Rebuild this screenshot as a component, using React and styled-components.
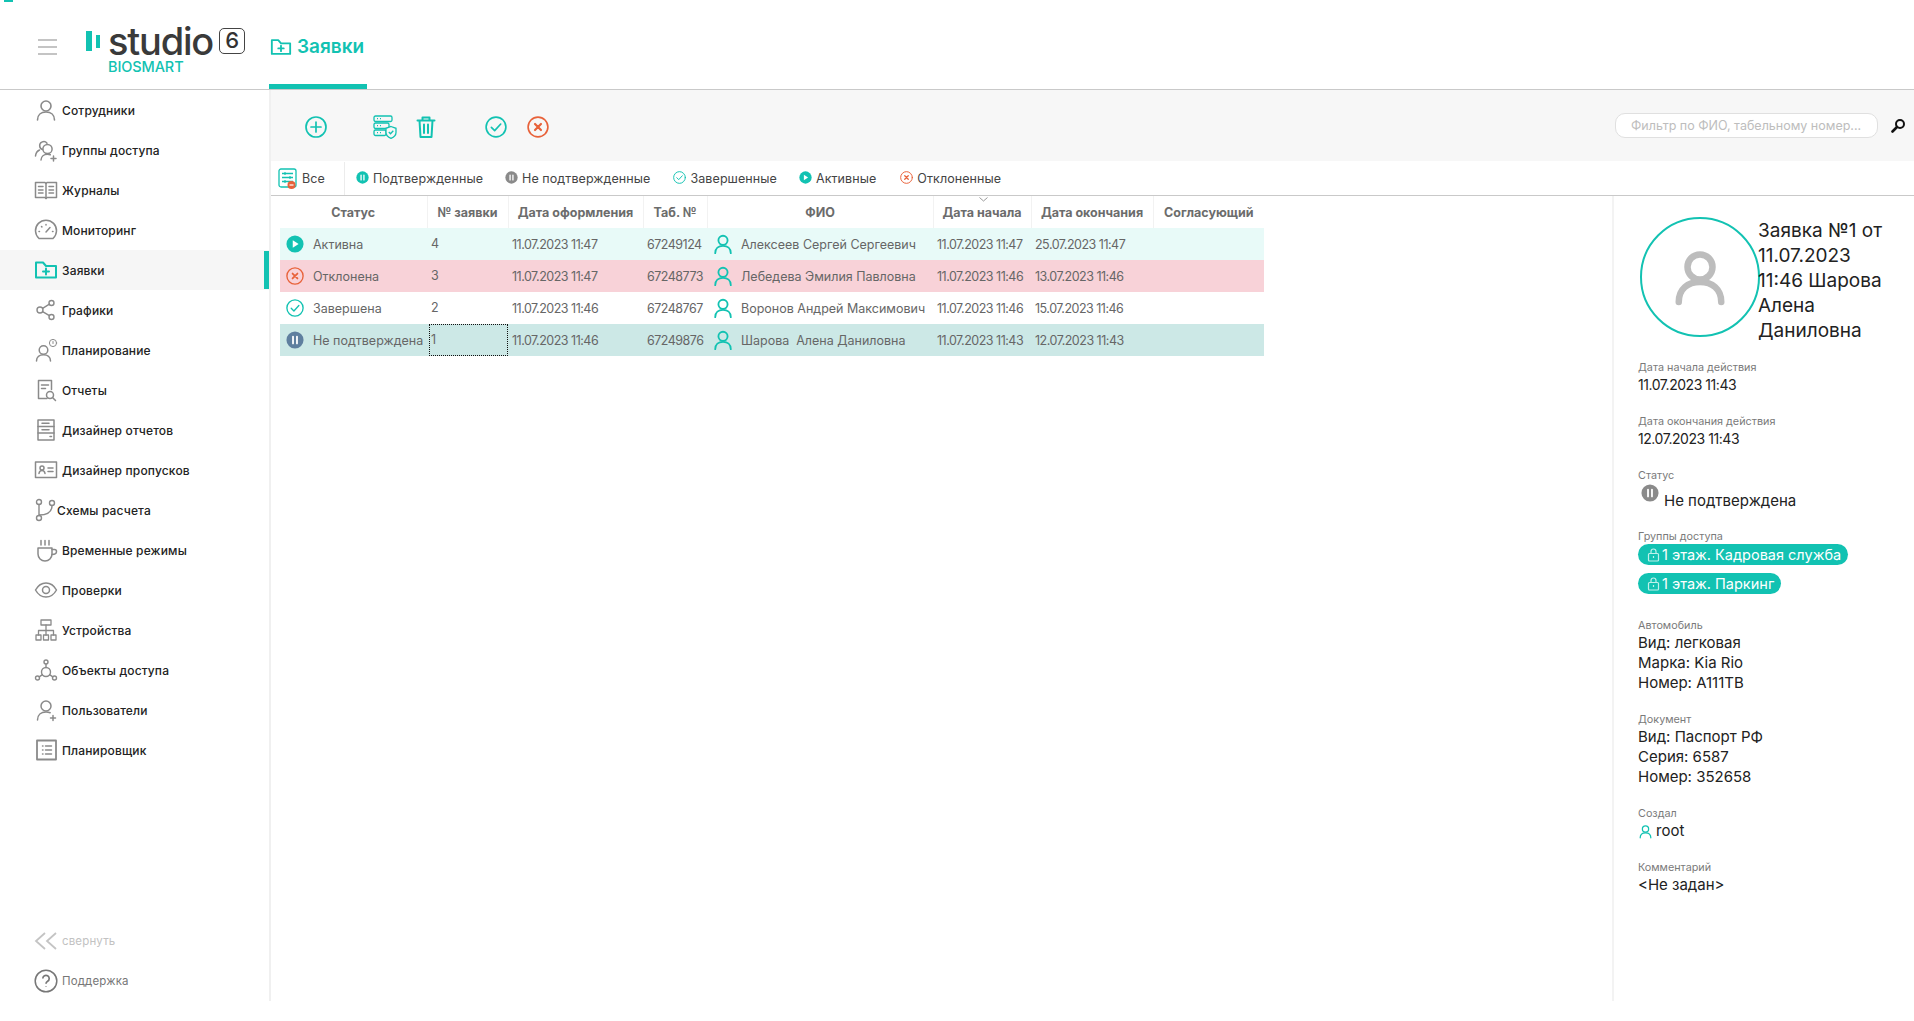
import React from 'react';
import styled, { createGlobalStyle } from 'styled-components';

const TEAL = '#12c2b2';
const ORANGE = '#e8623a';
const GRAY = '#8a8a8a';

const GlobalStyle = createGlobalStyle`
  html, body { margin: 0; padding: 0; background: #fff; }
  body { font-family: Inter, "Noto Sans", "Liberation Sans", sans-serif; color: #222; overflow: hidden; }
  * { box-sizing: border-box; }
`;

const Page = styled.div`
  position: relative;
  height: 1001px;
  display: flex;
  flex-direction: column;
`;
const LoadMark = styled.div`
  position: absolute;
  left: 4px;
  top: 0;
  width: 9px;
  height: 2px;
  background: ${TEAL};
`;

/* header */
const Header = styled.header`
  height: 90px;
  flex: none;
  display: flex;
  border-bottom: 1px solid #c9c9c9;
`;
const Burger = styled.div`
  width: 19px;
  margin: 39px 0 0 38px;
  height: 16px;
  display: flex;
  flex-direction: column;
  justify-content: space-between;
  span { height: 2px; background: #c4c4c4; }
`;
const Logo = styled.div`
  margin-left: 29px;
  width: 183px;
  padding-top: 25px;
`;
const LogoTop = styled.div`
  display: flex;
  align-items: center;
  height: 32px;
`;
const LogoBar = styled.span`
  width: ${p => p.$w}px;
  height: ${p => p.$h}px;
  margin-right: ${p => p.$gap}px;
  background: ${TEAL};
`;
const LogoWord = styled.span`
  font-size: 38px;
  font-weight: 500;
  letter-spacing: -1.2px;
  line-height: 32px;
  color: #3a3a3a;
`;
const LogoSix = styled.span`
  width: 26px;
  height: 26px;
  margin-left: 6px;
  border: 1.5px solid #444;
  border-radius: 5px;
  font-size: 22px;
  font-weight: 500;
  line-height: 23px;
  text-align: center;
  color: #333;
`;
const LogoSub = styled.div`
  margin: 2px 0 0 22px;
  font-size: 14.5px;
  line-height: 15px;
  font-weight: 500;
  letter-spacing: -.1px;
  color: ${TEAL};
`;
const HeaderTab = styled.div`
  width: 98px;
  height: 89px;
  display: flex;
  align-items: center;
  gap: 5px;
  padding: 9px 0 0 1px;
  border-bottom: 5px solid ${TEAL};
  font-size: 19px;
  font-weight: 600;
  white-space: nowrap;
  color: ${TEAL};
`;

/* sidebar */
const Body = styled.div`
  flex: 1;
  display: flex;
  min-height: 0;
`;
const Sidebar = styled.nav`
  width: 271px;
  flex: none;
  display: flex;
  flex-direction: column;
  border-right: 2px solid #f0f0f0;
`;
const NavItem = styled.div`
  position: relative;
  height: 40px;
  display: flex;
  align-items: center;
  gap: ${p => (p.$tight ? 0 : 4)}px;
  padding-left: ${p => (p.$tight ? 33 : 34)}px;
  background: ${p => (p.$active ? '#f6f6f6' : 'transparent')};
  font-size: 12px;
  font-weight: 500;
  letter-spacing: .15px;
  color: #222;
`;
const ActiveBar = styled.span`
  position: absolute;
  right: 0;
  top: 1px;
  width: 5px;
  height: 38px;
  background: ${TEAL};
`;
const SideFooter = styled.div`
  margin-top: auto;
`;
const FootItem = styled(NavItem)`
  font-weight: 400;
  font-size: 11.5px;
  color: ${p => (p.$muted ? '#c2c2c2' : '#777')};
  gap: 4px;
`;

/* main */
const Main = styled.main`
  flex: 1;
  min-width: 0;
  display: flex;
  flex-direction: column;
`;
const Toolbar = styled.div`
  height: 71px;
  flex: none;
  display: flex;
  align-items: center;
  padding: 3px 0 0 33px;
  background: #f7f7f7;
`;
const ToolIcon = styled.span`
  display: flex;
  margin-left: ${p => p.$ml || 0}px;
`;
const Search = styled.div`
  margin-left: auto;
  display: flex;
  align-items: center;
  gap: 13px;
  padding-right: 8px;
  margin-top: -3px;
`;
const SearchBox = styled.div`
  width: 263px;
  height: 25px;
  padding-left: 15px;
  border: 1px solid #e0e0e0;
  border-radius: 10px;
  background: #fff;
  font-size: 12.5px;
  line-height: 23px;
  color: #bdbdbd;
`;
const Filters = styled.div`
  height: 35px;
  flex: none;
  display: flex;
  align-items: center;
  padding-top: 1px;
  border-bottom: 1px solid #c9c9c9;
  font-size: 12.5px;
  letter-spacing: .08px;
  color: #444;
`;
const AllFilter = styled.div`
  width: 74px;
  height: 33px;
  display: flex;
  align-items: center;
  gap: 4px;
  padding-left: 7px;
  border-right: 1px solid #ececec;
`;
const FilterItem = styled.div`
  display: flex;
  align-items: center;
  gap: 4px;
  margin-left: ${p => p.$ml}px;
  svg { margin-top: -3px; }
`;
const Content = styled.div`
  flex: 1;
  min-height: 0;
  display: flex;
`;
const TableWrap = styled.div`
  flex: 1;
  padding-left: 9px;
`;
const Table = styled.table`
  width: 984px;
  table-layout: fixed;
  border-collapse: collapse;
  font-size: 12.5px;
  color: #666;
`;
const Th = styled.th`
  position: relative;
  width: ${p => p.$w}px;
  height: 32px;
  padding: 0;
  font-size: 12.5px;
  font-weight: 700;
  color: #6c6c6c;
  text-align: center;
  border-left: ${p => (p.$first ? 0 : '1px solid #f2f2f2')};
`;
const SortMark = styled.svg`
  position: absolute;
  top: 1px;
  left: 45px;
`;
const Row = styled.tr`
  height: 32px;
  background: ${p => p.$bg};
`;
const Td = styled.td`
  padding: 0 0 0 4px;
  white-space: nowrap;
  overflow: hidden;
`;
const NumTd = styled(Td)`
  letter-spacing: -.5px;
`;
const FocusTd = styled(Td)`
  padding: 0;
`;
const FocusBox = styled.div`
  height: 32px;
  margin-left: ${p => (p.$focus ? 2 : 0)}px;
  padding-left: ${p => (p.$focus ? 2 : 4)}px;
  line-height: 32px;
  ${p => p.$focus && 'outline: 1px dotted #111; outline-offset: -1px;'}
`;
const CellFlex = styled.div`
  display: flex;
  align-items: center;
  gap: ${p => p.$gap}px;
  padding-left: ${p => p.$pl}px;
`;

/* details */
const Details = styled.aside`
  width: 302px;
  flex: none;
  padding: 21px 0 0 24px;
  border-left: 2px solid #f3f3f3;
`;
const DetailsHead = styled.div`
  display: flex;
  margin-bottom: 17px;
`;
const Avatar = styled.div`
  width: 120px;
  height: 120px;
  flex: none;
  display: flex;
  align-items: center;
  justify-content: center;
  margin-left: 2px;
  border: 2px solid ${TEAL};
  border-radius: 50%;
`;
const Title = styled.div`
  margin: 1px 0 0 -2px;
  font-size: 19px;
  line-height: 25px;
  color: #222;
`;
const Block = styled.div`
  margin-bottom: ${p => p.$mb ?? 19}px;
`;
const Label = styled.div`
  font-size: 10.8px;
  line-height: 15px;
  color: #7a7a7a;
`;
const Value = styled.div`
  font-size: 15px;
  line-height: 20px;
  color: #222;
`;
const DateValue = styled(Value)`
  font-size: 14px;
  letter-spacing: -.45px;
`;
const StatusValue = styled.div`
  display: flex;
  gap: 5px;
  height: 27px;
  padding: 1px 0 0 3px;
  font-size: 15px;
  color: #222;
  span { padding-top: 8px; line-height: 17px; }
`;
const Pill = styled.div`
  display: flex;
  align-items: center;
  gap: 2px;
  width: fit-content;
  height: 21px;
  margin-bottom: 8px;
  padding: 0 7px 0 9px;
  border-radius: 11px;
  background: ${TEAL};
  font-size: 14.5px;
  color: #fff;
`;

/* icons */
const Svg = ({ size = 24, color = GRAY, sw = 1.5, children, vb = 24 }) => (
  <svg width={size} height={size} viewBox={`0 0 ${vb} ${vb}`} fill="none" stroke={color} strokeWidth={sw} strokeLinecap="round" strokeLinejoin="round" style={{ flex: 'none', display: 'block' }}>
    {children}
  </svg>
);

const FolderPlus = ({ size = 24, color = TEAL }) => (
  <Svg size={size} color={color} sw={2}>
    <path d="M2 19.5V4.5h7l3 3.5h10v11.5z" />
    <path d="M12 10.5v6M9 13.5h6" />
  </Svg>
);
const PersonIcon = ({ size = 24, color = GRAY, sw = 1.6 }) => (
  <Svg size={size} color={color} sw={sw}>
    <circle cx="12" cy="8" r="5" />
    <path d="M3.5 22c0-5.2 3.6-8 8.5-8s8.5 2.8 8.5 8" />
  </Svg>
);

const navIcons = {
  person: <PersonIcon />,
  group: (
    <Svg>
      <path d="M8.5 11.500a4 4 0 0 1-.8-7.300 4 4 0 0 1 5.300 1M1.500 18c.3-3 1.800-5 4-6" />
      <circle cx="13.500" cy="11" r="4.600" />
      <path d="M7 22c.2-3.600 3-5.700 6.500-5.700 1 0 2 .2 2.800.5M19.500 18v5M17 20.500h5" />
    </Svg>
  ),
  book: (
    <Svg>
      <path d="M1.500 4.500h9.500l1 1 1-1h9.500v15H13l-1 1-1-1H1.500z" />
      <path d="M12 5.500v15M4.500 8.500h4.500M4.500 12h4.500M4.500 15h4.500M15 8.500h4.500M15 12h4.500M15 15h4.500" />
    </Svg>
  ),
  gauge: (
    <Svg>
      <path d="M5 20.500a10.500 10.500 0 1 1 14 0z" />
      <path d="M12 14l4-4.500M5 13.500h.5M7.500 8.500l.4.4M12 6.500v.5M18.500 13.500h.5" />
    </Svg>
  ),
  folder: <FolderPlus />,
  share: (
    <Svg sw={1.4}>
      <circle cx="6" cy="12" r="3" />
      <circle cx="17.500" cy="5" r="2.500" />
      <circle cx="17.500" cy="19" r="2.500" />
      <path d="M8.600 10.400l6.800-4.200M8.600 13.600l6.800 4.100" />
    </Svg>
  ),
  plan: (
    <Svg>
      <circle cx="9.500" cy="12" r="4.300" />
      <path d="M2.500 23c0-4 3-6.300 7-6.300s7 2.300 7 6.300" />
      <circle cx="19" cy="5" r="3.600" strokeWidth="1" />
      <path d="M19 3.500V5.500" strokeWidth="1" />
    </Svg>
  ),
  report: (
    <Svg>
      <path d="M13 20.500H4.500v-18h13v9" />
      <path d="M7.500 7h7M7.500 10.500h4" />
      <circle cx="16" cy="17" r="3.500" />
      <path d="M18.500 19.500l3 3" />
    </Svg>
  ),
  designer: (
    <Svg>
      <rect x="4" y="2" width="16" height="20" />
      <path d="M4 8.500h16M4 15h16M8 5.200h7M8 11.700h7M16 18.500h1.500" />
    </Svg>
  ),
  card: (
    <Svg>
      <rect x="1.500" y="4" width="21" height="15.500" />
      <circle cx="8" cy="10" r="2" />
      <path d="M5 15.500c.3-2 1.500-3 3-3s2.700 1 3 3M14 10h5M14 13.500h5" />
    </Svg>
  ),
  branch: (
    <Svg sw={1.4}>
      <circle cx="6" cy="4" r="2.500" />
      <circle cx="6" cy="20" r="2.500" />
      <circle cx="19" cy="5" r="2.500" />
      <path d="M6 6.500v11M6 17c8 0 13-3 13-9.500" />
    </Svg>
  ),
  cup: (
    <Svg>
      <path d="M4 10h14v6a7 7 0 0 1-14 0z" />
      <path d="M18 11.500h2.500a2 2 0 0 1 2 2c0 1.800-1.800 3-4.500 3M7 2.500v4.500M11 2.500v4.500M15 2.500v4.500" />
    </Svg>
  ),
  eye: (
    <Svg>
      <path d="M1.500 12C4 7.500 7.500 5 12 5s8 2.500 10.500 7c-2.500 4.500-6 7-10.500 7s-8-2.500-10.500-7z" />
      <circle cx="12" cy="12" r="3.500" />
    </Svg>
  ),
  tree: (
    <Svg sw={1.3}>
      <rect x="7" y="2" width="10" height="5" />
      <rect x="2" y="17" width="5" height="5" />
      <rect x="9.500" y="17" width="5" height="5" />
      <rect x="17" y="17" width="5" height="5" />
      <path d="M12 7v10M4.500 17v-4.500h15V17" />
    </Svg>
  ),
  nodes: (
    <Svg sw={1.4}>
      <circle cx="12" cy="4" r="2" />
      <circle cx="12" cy="14" r="4.500" />
      <circle cx="3.500" cy="20" r="2" />
      <circle cx="20.500" cy="20" r="2" />
      <path d="M12 6v3.500M5.200 18.800l3.200-2.200M18.800 18.800l-3.200-2.200" />
    </Svg>
  ),
  userAdd: (
    <Svg>
      <circle cx="12" cy="8" r="5" />
      <path d="M3.500 22c0-5.200 3.600-8 8.500-8 1.500 0 3 .3 4.200.8M19 17.500v5M16.500 20h5" />
    </Svg>
  ),
  list: (
    <Svg>
      <rect x="3" y="2.500" width="19" height="19" strokeWidth="1.800" />
      <path d="M8.500 8h.5M11.500 8h6M8.500 12h.5M11.500 12h6M8.500 16h.5M11.500 16h6" />
    </Svg>
  ),
};

const StatusIcon = ({ kind, size = 20, color = TEAL }) => {
  if (kind === 'play') {
    return (
      <svg width={size} height={size} viewBox="0 0 20 20" style={{ flex: 'none', display: 'block' }}>
        <circle cx="10" cy="10" r="9.500" fill={color} />
        <path d="M7.500 5.800l6.500 4.200-6.500 4.200z" fill="#fff" />
      </svg>
    );
  }
  if (kind === 'pause') {
    return (
      <svg width={size} height={size} viewBox="0 0 20 20" style={{ flex: 'none', display: 'block' }}>
        <circle cx="10" cy="10" r="9.500" fill={color} />
        <path d="M7.800 6.200v7.600M12.200 6.200v7.600" stroke="#fff" strokeWidth="2" strokeLinecap="round" />
      </svg>
    );
  }
  return (
    <Svg size={size} color={color} vb={20} sw={1.5}>
      <circle cx="10" cy="10" r="9" />
      {kind === 'check'
        ? <path d="M5.800 10.300l3 3 5.500-6" />
        : <path d="M7.300 7.300l5.400 5.400M12.700 7.300l-5.400 5.400" strokeWidth="2" />}
    </Svg>
  );
};

const FilterListIcon = () => (
  <svg width="20" height="22" viewBox="0 0 20 22" fill="none" style={{ flex: 'none', display: 'block' }}>
    <rect x="1" y="1" width="17" height="18" rx="2" stroke={TEAL} strokeWidth="1.300" />
    <path d="M4 5.500h11M4 9.500h11M4 13.500h11" stroke={TEAL} strokeWidth="1.300" />
    <path d="M7 4v3M12 8v3M7 12v3" stroke={TEAL} strokeWidth="1.100" />
    <circle cx="13.500" cy="17" r="4" fill={ORANGE} />
    <path d="M11.500 17h4" stroke="#fff" strokeWidth="1.200" />
  </svg>
);

const ShieldListIcon = () => (
  <svg width="24" height="24" viewBox="0 0 24 24" fill="none" stroke={TEAL} strokeWidth="1.300" style={{ display: 'block' }}>
    <rect x="1" y="1" width="18" height="5.500" rx="1.500" />
    <rect x="1" y="8" width="15" height="5.500" rx="1.500" />
    <rect x="1" y="15" width="12" height="5.500" rx="1.500" />
    <path d="M4 3.700h1M7 3.700h1M4 10.700h1M7 10.700h1M4 17.700h1M7 17.700h1" />
    <path d="M18 11.500l5 1.800v4.200c0 2.700-2.200 4.700-5 5.800-2.800-1.100-5-3.100-5-5.800v-4.200z" fill="#f7f7f7" />
    <path d="M15.800 17l1.700 1.700 2.800-3" />
  </svg>
);

const TrashIcon = () => (
  <Svg size={24} color={TEAL} sw={2}>
    <path d="M3.500 5.500h17M8.500 5V2.500h7V5M5.500 5.500l1 16.500h11l1-16.500M10 9.500v8.500M14 9.500v8.500" />
  </Svg>
);

const PlusCircle = () => (
  <Svg size={24} color={TEAL} sw={1.7}>
    <circle cx="12" cy="12" r="10" />
    <path d="M12 7v10M7 12h10" />
  </Svg>
);

const SearchIcon = () => (
  <svg width="15" height="15" viewBox="0 0 15 15" fill="none" stroke="#111" strokeWidth="2" style={{ display: 'block' }}>
    <circle cx="9" cy="6" r="4" />
    <path d="M6 9l-4.500 4.500" strokeWidth="2.600" strokeLinecap="round" />
  </svg>
);

const LockIcon = () => (
  <svg width="13" height="14" viewBox="0 0 13 14" fill="none" stroke="#bff0ea" strokeWidth="1.200" style={{ flex: 'none', display: 'block' }}>
    <rect x="1.500" y="5.500" width="10" height="7.500" rx="1" />
    <path d="M4 5.500V3.500a2.500 2.500 0 0 1 5 0v2M6.500 8v2" />
  </svg>
);

const CollapseIcon = () => (
  <svg width="24" height="20" viewBox="0 0 24 20" fill="none" stroke="#c4c4c4" strokeWidth="1.800" style={{ flex: 'none', display: 'block' }}>
    <path d="M11 2L2 10l9 8M22 2l-9 8 9 8" />
  </svg>
);

const HelpIcon = () => (
  <svg width="24" height="24" viewBox="0 0 24 24" fill="none" stroke="#777" style={{ flex: 'none', display: 'block' }}>
    <circle cx="12" cy="12" r="10.800" strokeWidth="1.500" />
    <path d="M8.800 9.500a3.200 3.200 0 1 1 4.800 2.800c-1 .6-1.600 1.200-1.600 2.500M12 17.500v.6" strokeWidth="1.700" />
  </svg>
);

const NAV = [
  ['person', 'Сотрудники'],
  ['group', 'Группы доступа'],
  ['book', 'Журналы'],
  ['gauge', 'Мониторинг'],
  ['folder', 'Заявки', true],
  ['share', 'Графики'],
  ['plan', 'Планирование'],
  ['report', 'Отчеты'],
  ['designer', 'Дизайнер отчетов'],
  ['card', 'Дизайнер пропусков'],
  ['branch', 'Схемы расчета'],
  ['cup', 'Временные режимы'],
  ['eye', 'Проверки'],
  ['tree', 'Устройства'],
  ['nodes', 'Объекты доступа'],
  ['userAdd', 'Пользователи'],
  ['list', 'Планировщик'],
];

const COLUMNS = [
  ['Статус', 147],
  ['№ заявки', 81],
  ['Дата оформления', 135],
  ['Таб. №', 64],
  ['ФИО', 226],
  ['Дата начала', 98],
  ['Дата окончания', 122],
  ['Согласующий', 111],
];

const ROWS = [
  { kind: 'play', color: TEAL, status: 'Активна', num: '4', made: '11.07.2023 11:47', tab: '67249124', name: 'Алексеев Сергей Сергеевич', from: '11.07.2023 11:47', to: '25.07.2023 11:47', bg: '#e8faf8' },
  { kind: 'cross', color: ORANGE, status: 'Отклонена', num: '3', made: '11.07.2023 11:47', tab: '67248773', name: 'Лебедева Эмилия Павловна', from: '11.07.2023 11:46', to: '13.07.2023 11:46', bg: '#f8d2d8' },
  { kind: 'check', color: TEAL, status: 'Завершена', num: '2', made: '11.07.2023 11:46', tab: '67248767', name: 'Воронов Андрей Максимович', from: '11.07.2023 11:46', to: '15.07.2023 11:46', bg: '#fff' },
  { kind: 'pause', color: '#5f7f9f', status: 'Не подтверждена', num: '1', made: '11.07.2023 11:46', tab: '67249876', name: 'Шарова\u00a0\u00a0Алена Даниловна', from: '11.07.2023 11:43', to: '12.07.2023 11:43', bg: '#cce8e6', focus: true },
];

const FILTERS = [
  { kind: 'pause', color: TEAL, text: 'Подтвержденные', ml: 11 },
  { kind: 'pause', color: GRAY, text: 'Не подтвержденные', ml: 22 },
  { kind: 'check', color: TEAL, text: 'Завершенные', ml: 23 },
  { kind: 'play', color: TEAL, text: 'Активные', ml: 22 },
  { kind: 'cross', color: ORANGE, text: 'Отклоненные', ml: 24 },
];

export default function App() {
  return (
    <Page>
      <GlobalStyle />
      <LoadMark />
      <Header>
        <Burger><span /><span /><span /></Burger>
        <Logo>
          <LogoTop>
            <LogoBar $w={6} $h={20} $gap={4} />
            <LogoBar $w={4} $h={13} $gap={8} />
            <LogoWord>studio</LogoWord>
            <LogoSix>6</LogoSix>
          </LogoTop>
          <LogoSub>BIOSMART</LogoSub>
        </Logo>
        <HeaderTab><FolderPlus size={22} />Заявки</HeaderTab>
      </Header>
      <Body>
        <Sidebar>
          {NAV.map(([icon, text, active]) => (
            <NavItem key={text} $active={active} $tight={icon === 'branch'}>
              {navIcons[icon]}
              {text}
              {active && <ActiveBar />}
            </NavItem>
          ))}
          <SideFooter>
            <FootItem $muted><CollapseIcon />свернуть</FootItem>
            <FootItem><HelpIcon />Поддержка</FootItem>
          </SideFooter>
        </Sidebar>
        <Main>
          <Toolbar>
            <ToolIcon><PlusCircle /></ToolIcon>
            <ToolIcon $ml={45}><ShieldListIcon /></ToolIcon>
            <ToolIcon $ml={17}><TrashIcon /></ToolIcon>
            <ToolIcon $ml={47}><StatusIcon kind="check" size={22} /></ToolIcon>
            <ToolIcon $ml={20}><StatusIcon kind="cross" size={22} color={ORANGE} /></ToolIcon>
            <Search>
              <SearchBox>Фильтр по ФИО, табельному номер...</SearchBox>
              <SearchIcon />
            </Search>
          </Toolbar>
          <Filters>
            <AllFilter><FilterListIcon />Все</AllFilter>
            {FILTERS.map(f => (
              <FilterItem key={f.text} $ml={f.ml}>
                <StatusIcon kind={f.kind} color={f.color} size={13} />
                {f.text}
              </FilterItem>
            ))}
          </Filters>
          <Content>
            <TableWrap>
              <Table>
                <thead>
                  <tr>
                    {COLUMNS.map(([title, w], i) => (
                      <Th key={title} $w={w} $first={i === 0}>
                        {title === 'Дата начала' && (
                          <SortMark width="9" height="5" viewBox="0 0 9 5" fill="none" stroke="#999"><path d="M.5.500L4.500 4l4-3.500" /></SortMark>
                        )}
                        {title}
                      </Th>
                    ))}
                  </tr>
                </thead>
                <tbody>
                  {ROWS.map(r => (
                    <Row key={r.num} $bg={r.bg}>
                      <Td><CellFlex $gap={9} $pl={2}><StatusIcon kind={r.kind} color={r.color} size={18} />{r.status}</CellFlex></Td>
                      <FocusTd><FocusBox $focus={r.focus}>{r.num}</FocusBox></FocusTd>
                      <NumTd>{r.made}</NumTd>
                      <NumTd>{r.tab}</NumTd>
                      <Td><CellFlex $gap={7} $pl={1}><PersonIcon size={22} color={TEAL} sw={2} />{r.name}</CellFlex></Td>
                      <NumTd>{r.from}</NumTd>
                      <NumTd>{r.to}</NumTd>
                      <Td />
                    </Row>
                  ))}
                </tbody>
              </Table>
            </TableWrap>
            <Details>
              <DetailsHead>
                <Avatar><PersonIcon size={60} color="#bdbdbd" sw={2.6} /></Avatar>
                <Title>Заявка №1 от<br />11.07.2023<br />11:46 Шарова<br />Алена<br />Даниловна</Title>
              </DetailsHead>
              <Block><Label>Дата начала действия</Label><DateValue>11.07.2023 11:43</DateValue></Block>
              <Block><Label>Дата окончания действия</Label><DateValue>12.07.2023 11:43</DateValue></Block>
              <Block>
                <Label>Статус</Label>
                <StatusValue><StatusIcon kind="pause" color={GRAY} size={18} /><span>Не подтверждена</span></StatusValue>
              </Block>
              <Block $mb={24}>
                <Label>Группы доступа</Label>
                <Pill><LockIcon />1 этаж. Кадровая служба</Pill>
                <Pill><LockIcon />1 этаж. Паркинг</Pill>
              </Block>
              <Block>
                <Label>Автомобиль</Label>
                <Value>Вид: легковая</Value>
                <Value>Марка: Kia Rio</Value>
                <Value>Номер: А111ТВ</Value>
              </Block>
              <Block>
                <Label>Документ</Label>
                <Value>Вид: Паспорт РФ</Value>
                <Value>Серия: 6587</Value>
                <Value>Номер: 352658</Value>
              </Block>
              <Block>
                <Label>Создал</Label>
                <Value><CellFlex $gap={3} $pl={0}><PersonIcon size={15} color={TEAL} sw={2} />root</CellFlex></Value>
              </Block>
              <Block>
                <Label>Комментарий</Label>
                <Value>&lt;Не задан&gt;</Value>
              </Block>
            </Details>
          </Content>
        </Main>
      </Body>
    </Page>
  );
}
